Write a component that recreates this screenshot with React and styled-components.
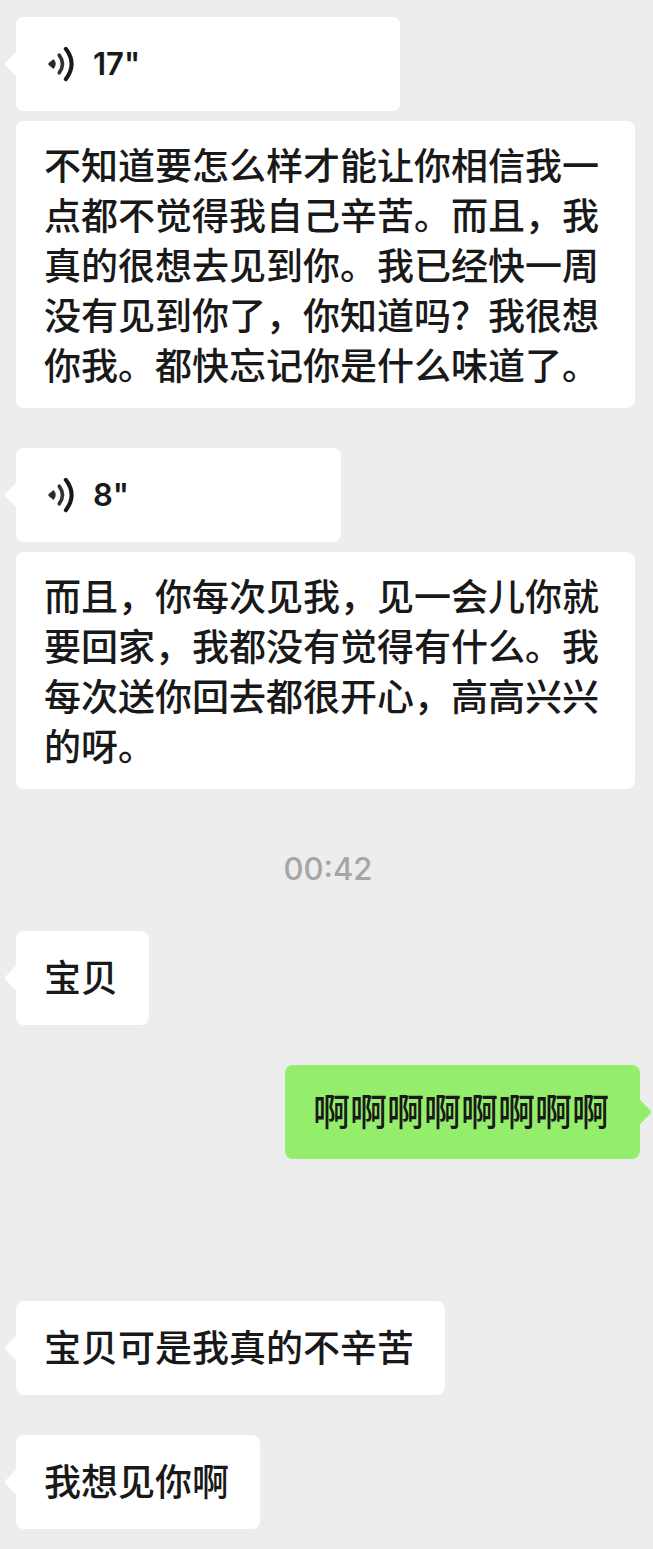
import styled, { createGlobalStyle, css } from "styled-components";

const MESSAGES = [
  {
    id: 1,
    type: "voice",
    seconds: 17,
    width: 384,
    transcript:
      "不知道要怎么样才能让你相信我一点都不觉得我自己辛苦。而且，我真的很想去见到你。我已经快一周没有见到你了，你知道吗？我很想你我。都快忘记你是什么味道了。",
  },
  {
    id: 2,
    type: "voice",
    seconds: 8,
    width: 325,
    transcript:
      "而且，你每次见我，见一会儿你就要回家，我都没有觉得有什么。我每次送你回去都很开心，高高兴兴的呀。",
  },
  { id: 3, type: "time", text: "00:42" },
  { id: 4, type: "text", text: "宝贝" },
  { id: 5, type: "text", text: "啊啊啊啊啊啊啊啊", mine: true },
  { id: 6, type: "time", text: "" },
  { id: 7, type: "text", text: "宝贝可是我真的不辛苦" },
  { id: 8, type: "text", text: "我想见你啊" },
];

const VoiceIcon = () => (
  <svg width="28" height="36" viewBox="0 0 28 36" fill="none" aria-hidden="true">
    <path
      d="M5.4 14 L1.4 17.2 Q0.6 18 1.4 18.8 L5.4 22 Q8.6 18 5.4 14 Z"
      fill="#2b2b2b"
      stroke="#2b2b2b"
      strokeWidth="1.4"
      strokeLinejoin="round"
    />
    <path
      d="M11.2 9.2 Q17.8 18 11.2 26.8"
      stroke="#333"
      strokeWidth="3.6"
      strokeLinecap="round"
    />
    <path
      d="M17.8 2.8 Q29.4 18 17.8 33.2"
      stroke="#191919"
      strokeWidth="4"
      strokeLinecap="round"
    />
  </svg>
);

const VoiceMessage = ({ message }) => (
  <VoiceGroup>
    <VoiceBubble type="button" $width={message.width}>
      <VoiceIcon />
      <Duration>{message.seconds}"</Duration>
    </VoiceBubble>
    <Transcript>{message.transcript}</Transcript>
  </VoiceGroup>
);

const Message = ({ message }) => {
  if (message.type === "voice") return <VoiceMessage message={message} />;
  if (message.type === "time") return <TimeLabel>{message.text}</TimeLabel>;
  return <TextBubble $mine={message.mine}>{message.text}</TextBubble>;
};

const App = () => (
  <>
    <GlobalStyle />
    <Chat>
      {MESSAGES.map((message) => (
        <Message key={message.id} message={message} />
      ))}
    </Chat>
  </>
);

export default App;

const GlobalStyle = createGlobalStyle`
  * {
    box-sizing: border-box;
  }

  body {
    margin: 0;
    background: #ededed;
    color: #191919;
    font-family: "Noto Sans CJK SC", sans-serif;
  }
`;

const Chat = styled.main`
  display: flex;
  flex-direction: column;
  align-items: flex-start;
  gap: 40px;
  padding: 17px 13px 20px 16px;
`;

const VoiceGroup = styled.section`
  display: flex;
  flex-direction: column;
  align-items: flex-start;
  gap: 10px;
  align-self: stretch;
`;

const messageText = css`
  font-size: 37px;
  font-weight: 500;
  line-height: 50px;
`;

const bubble = css`
  position: relative;
  max-width: 100%;
  min-height: 94px;
  border-radius: 8px;
  background: ${({ $mine }) => ($mine ? "#95ee6b" : "#fff")};

  &::after {
    content: "";
    position: absolute;
    top: 37px;
    ${({ $mine }) => ($mine ? "right: -8px;" : "left: -8px;")}
    width: 20px;
    height: 20px;
    border-radius: 3px;
    background: inherit;
    transform: rotate(45deg);
  }
`;

const TextBubble = styled.div`
  ${bubble}
  ${messageText}
  align-self: ${({ $mine }) => ($mine ? "flex-end" : "flex-start")};
  padding: 20px 31px 24px 28px;
`;

const VoiceBubble = styled.button`
  ${bubble}
  display: flex;
  align-items: center;
  gap: 17px;
  width: ${({ $width }) => $width}px;
  padding: 0 32px;
  border: 0;
  color: inherit;
  cursor: pointer;
`;

const Duration = styled.span`
  font-family: Inter, sans-serif;
  font-size: 31px;
  font-weight: 600;
  line-height: 40px;
`;

const Transcript = styled.p`
  ${messageText}
  margin: 0 5px 0 0;
  padding: 18px 28px 19px;
  border-radius: 8px;
  background: #fff;
`;

const TimeLabel = styled.div`
  align-self: center;
  height: 62px;
  padding-top: 20px;
  color: #a6a6a6;
  font-family: Inter, sans-serif;
  font-size: 31px;
  font-weight: 500;
  line-height: 40px;
`;
